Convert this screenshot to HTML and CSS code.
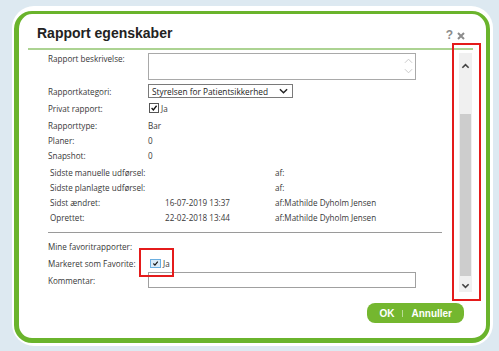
FILE: index.html
```html
<!DOCTYPE html>
<html lang="da">
<head>
<meta charset="utf-8">
<title>Rapport egenskaber</title>
<link rel="stylesheet" href="styles.css">
</head>
<body>
<div class="dialog">
  <div class="frame">
    <div class="header">
      <h1 class="title">Rapport egenskaber</h1>
      <div class="tools">
        <span class="help">?</span>
        <svg class="close" viewBox="0 0 8 8"><path d="M1 1L7 7M7 1L1 7"/></svg>
      </div>
    </div>

    <div class="content">
      <div class="pane">
        <div class="form top-form">
          <span class="lbl lbl-top">Rapport beskrivelse:</span>
          <div class="textarea">
            <span class="spin">
              <svg viewBox="0 0 10 6"><path d="M1 5L5 1L9 5"/></svg>
              <svg viewBox="0 0 10 6"><path d="M1 1L5 5L9 1"/></svg>
            </span>
          </div>
          <span class="lbl">Rapportkategori:</span>
          <div class="select">
            <span>Styrelsen for Patientsikkerhed</span>
            <svg viewBox="0 0 10 6"><path d="M1 1L5 5L9 1"/></svg>
          </div>
          <span class="lbl">Privat rapport:</span>
          <span class="check-wrap">
            <span class="checkbox"><svg viewBox="0 0 10 10"><path d="M2 5L4.2 7.4L8.2 2.2"/></svg></span>Ja
          </span>
          <span class="lbl">Rapporttype:</span>
          <span class="val">Bar</span>
          <span class="lbl">Planer:</span>
          <span class="val">0</span>
          <span class="lbl">Snapshot:</span>
          <span class="val">0</span>
        </div>

        <div class="stamps">
          <span>Sidste manuelle udførsel:</span><span></span><span>af:</span>
          <span>Sidste planlagte udførsel:</span><span></span><span>af:</span>
          <span>Sidst ændret:</span><span>16-07-2019 13:37</span><span>af:Mathilde Dyholm Jensen</span>
          <span>Oprettet:</span><span>22-02-2018 13:44</span><span>af:Mathilde Dyholm Jensen</span>
        </div>

        <hr class="sep">

        <div class="form fav-form">
          <span class="lbl">Mine favoritrapporter:</span>
          <span></span>
          <span class="lbl">Markeret som Favorite:</span>
          <span class="check-wrap marked">
            <span class="checkbox focus"><svg viewBox="0 0 10 10"><path d="M2 5L4.2 7.4L8.2 2.2"/></svg></span>Ja
          </span>
          <span class="lbl">Kommentar:</span>
          <div class="input"></div>
        </div>
      </div>

      <div class="scrollbar">
        <svg class="arrow up" viewBox="0 0 10 6"><path d="M1.5 5L5 1.5L8.5 5"/></svg>
        <span class="thumb"></span>
        <svg class="arrow down" viewBox="0 0 10 6"><path d="M1.5 1L5 4.5L8.5 1"/></svg>
      </div>
    </div>

    <div class="footer">
      <button class="ok-btn" type="button"><span>OK</span><span class="bar"></span><span>Annuller</span></button>
    </div>
  </div>
</div>
</body>
</html>
```

FILE: styles.css
```css
body {
  margin: 0;
  height: 351px;
  overflow: hidden;
  background-color: #dde9f1;
  font-family: "Open Sans", "Noto Sans", sans-serif;
  color: #383838;
}
.dialog {
  box-sizing: border-box;
  width: 481px;
  height: 340px;
  margin: 6px 0 0 12px;
  padding: 5px 3px 3px 2px;
  background-color: #fff;
  border-radius: 22px;
}
.frame {
  box-sizing: border-box;
  height: 100%;
  border: solid #6ab42c;
  border-width: 3px 4px 5px 5px;
  border-radius: 18px;
  display: flex;
  flex-direction: column;
}

/* header */
.header {
  display: flex;
  justify-content: space-between;
  align-items: flex-start;
  height: 34px;
  margin: 0 13px 0 9px;
  border-bottom: 2px solid #acd392;
}
.title {
  margin: 11px 0 0 9px;
  font-family: "Liberation Sans", Arial, sans-serif;
  font-size: 14px;
  line-height: 16px;
  font-weight: bold;
  color: #222;
}
.tools {
  display: flex;
  align-items: center;
  gap: 4px;
  margin: 16px 8px 0 0;
}
.help {
  font-family: "Liberation Sans", Arial, sans-serif;
  font-weight: bold;
  font-size: 12px;
  line-height: 11px;
  color: #8c8c8c;
}
.close {
  width: 8px;
  height: 8px;
  stroke: #8c8c8c;
  stroke-width: 2;
  fill: none;
}

/* scroll area */
.content {
  display: flex;
  height: 239px;
  margin: 3px 13px 0 9px;
}
.pane {
  flex: 1;
  padding-left: 20px;
  font-size: 8.1px;
}
.form {
  display: grid;
  grid-template-columns: 100px 1fr;
  align-items: center;
}
.top-form {
  grid-template-rows: 31px 14px 20px 15px 15px 15px;
}
.lbl-top {
  align-self: start;
  line-height: 12px;
}
.textarea {
  align-self: start;
  box-sizing: border-box;
  width: 268px;
  height: 27px;
  border: 1px solid #a9a9a9;
  display: flex;
  justify-content: flex-end;
}
.spin {
  display: flex;
  flex-direction: column;
  gap: 4px;
  padding: 4px 2px 0 0;
}
.spin svg {
  width: 9px;
  height: 6px;
  stroke: #c4c4c4;
  fill: none;
  stroke-width: 1;
}
.select {
  box-sizing: border-box;
  width: 145px;
  height: 14px;
  border: 1px solid #7a7a7a;
  display: flex;
  align-items: center;
  justify-content: space-between;
  padding: 0 4px 0 3px;
  font-size: 8.3px;
  color: #222;
}
.select svg {
  width: 9px;
  height: 6px;
  stroke: #222;
  stroke-width: 1.6;
  fill: none;
}
.check-wrap {
  display: inline-flex;
  align-items: center;
  gap: 2px;
  justify-self: start;
  padding-left: 1px;
}
.checkbox {
  box-sizing: border-box;
  width: 10px;
  height: 10px;
  border: 1px solid #555;
  background-color: #fff;
  display: flex;
}
.checkbox svg {
  width: 100%;
  height: 100%;
  stroke: #111;
  stroke-width: 1.6;
  fill: none;
}
.checkbox.focus {
  width: 11px;
  height: 9px;
  border-color: #6aaee0;
  background-color: #d9ebf8;
}
.marked {
  position: relative;
  padding-left: 2px;
}
.marked::after {
  content: "";
  position: absolute;
  left: -9px;
  top: -10px;
  width: 31px;
  height: 25px;
  border: 2px solid #e41b1b;
}
.stamps {
  display: grid;
  grid-template-columns: 115px 110px 1fr;
  grid-auto-rows: 15px;
  align-items: center;
  margin: 2px 0 0 2px;
}
.sep {
  margin: 7px 17px 0 0;
  border: 0;
  border-top: 1px solid #9a9a9a;
}
.fav-form {
  grid-template-rows: 15px 16px 16px;
  row-gap: 1px;
  margin-top: 6px;
}
.input {
  box-sizing: border-box;
  width: 268px;
  height: 16px;
  border: 1px solid #a0a0a0;
}

/* fake scrollbar with red highlight */
.scrollbar {
  position: relative;
  width: 13px;
  margin-right: 1px;
  background-color: #f0f0f0;
  display: flex;
  flex-direction: column;
  align-items: center;
}
.scrollbar::after {
  content: "";
  position: absolute;
  left: -7px;
  right: -9px;
  top: -10px;
  bottom: -9px;
  border: 2px solid #e41b1b;
}
.arrow {
  flex: none;
  width: 9px;
  height: 6px;
  stroke: #444;
  stroke-width: 1.8;
  fill: none;
}
.arrow.up {
  margin-top: 10px;
}
.thumb {
  flex: none;
  width: 11px;
  height: 162px;
  margin-top: 45px;
  background-color: #cdcdcd;
}
.arrow.down {
  margin-top: 7px;
}

/* footer */
.footer {
  display: flex;
  justify-content: flex-end;
  margin: 11px 22px 0 0;
}
.ok-btn {
  display: flex;
  align-items: center;
  gap: 8px;
  height: 20px;
  padding: 0 12px;
  border: none;
  border-radius: 8px;
  background-color: #74b72f;
  color: #fff;
  font-family: "Liberation Sans", Arial, sans-serif;
  font-weight: bold;
  font-size: 10px;
  cursor: pointer;
}
.bar {
  width: 1px;
  height: 7px;
  background-color: #b9dc97;
}
```
